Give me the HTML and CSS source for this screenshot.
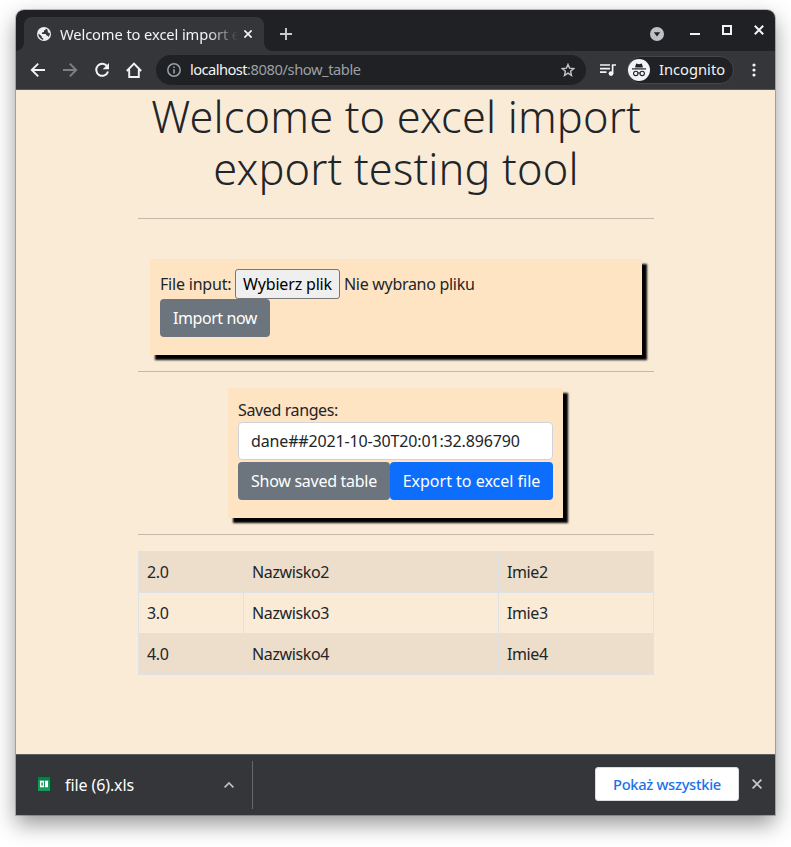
FILE: index.html
```html
<!DOCTYPE html>
<html lang="pl">
<head>
<meta charset="utf-8">
<title>Welcome to excel import export testing tool</title>
<link rel="stylesheet" href="styles.css">
</head>
<body>
<div class="window">
  <div class="tabstrip">
    <div class="tab">
      <svg class="favicon" viewBox="0 0 14 14"><circle cx="7" cy="7" r="7" fill="#eeeff0"/><path d="M1.5 6.4 4.7 9.2V10.5L6.2 11.6V13A6 6 0 0 1 1.5 6.4ZM8.7 1.5 8.6 2.8 7 3.4V5L5 5.6V7H8.8L9.6 8.8H11.3L11.5 10.4A6 6 0 0 0 12.8 6L10.9 5.4 10.5 2.5Z" fill="#35363a"/></svg>
      <span class="tab-title">Welcome to excel import e</span>
      <svg class="tab-close" viewBox="0 0 8 8"><path d="M.4.4 7.6 7.6M7.6.4.4 7.6" stroke="#f1f3f4" stroke-width="1.7"/></svg>
    </div>
    <svg class="newtab" viewBox="0 0 12 12"><path d="M6 0V12M0 6H12" stroke="#c9cbce" stroke-width="1.9"/></svg>
    <div class="controls">
      <svg width="14" height="14" class="c-search" viewBox="0 0 14 14"><circle cx="7" cy="7" r="7" fill="#bdc1c6"/><path d="M3.8 5.2H10.2L7 9.4Z" fill="#202124"/></svg>
      <svg width="10" height="10" class="c-min" viewBox="0 0 10 10"><path d="M0 9H10" stroke="#f1f3f4" stroke-width="2"/></svg>
      <svg width="10" height="10" class="c-max" viewBox="0 0 10 10"><path d="M1 1H9V9H1Z" stroke="#f1f3f4" stroke-width="2" fill="none"/></svg>
      <svg width="10" height="10" viewBox="0 0 10 10"><path d="M.8.8 9.2 9.2M9.2.8.8 9.2" stroke="#f1f3f4" stroke-width="2"/></svg>
    </div>
  </div>
  <div class="toolbar">
    <svg class="nav" viewBox="0 0 16 16"><path d="M15 8H2M8.2 1.6 1.8 8 8.2 14.4" stroke="#f1f3f4" stroke-width="1.9" fill="none"/></svg>
    <svg class="nav" viewBox="0 0 16 16"><path d="M1 8H14M7.8 1.6 14.2 8 7.8 14.4" stroke="#7f8083" stroke-width="1.9" fill="none"/></svg>
    <svg class="nav" viewBox="0 0 16 16"><path d="M13.3 4.6A6 6 0 1 0 14 9.5" stroke="#f1f3f4" stroke-width="2" fill="none"/><path d="M15 1V7.3H8.7Z" fill="#f1f3f4"/></svg>
    <svg class="nav" viewBox="0 0 16 16"><path d="M.8 9 8 1.5 15.2 9M3.2 7.5V15H12.8V7.5" stroke="#f1f3f4" stroke-width="1.9" fill="none"/></svg>
    <div class="omnibox">
      <svg width="14" height="14" viewBox="0 0 14 14"><circle cx="7" cy="7" r="6.2" stroke="#9aa0a6" stroke-width="1.5" fill="none"/><path d="M7 6.2V10.6M7 3.4V5" stroke="#9aa0a6" stroke-width="1.6"/></svg>
      <span class="url"><span class="host">localhost</span><span class="path">:8080/show_table</span></span>
      <svg width="14" height="14" viewBox="0 0 14 14"><path d="M7 1.4 8.6 5.2 12.7 5.6 9.6 8.3 10.5 12.4 7 10.2 3.5 12.4 4.4 8.3 1.3 5.6 5.4 5.2Z" stroke="#c4c6c8" stroke-width="1.4" fill="none"/></svg>
    </div>
    <svg class="queue" viewBox="0 0 16 14"><path d="M0 2H10M0 5.6H10M0 9.2H6.5" stroke="#f1f3f4" stroke-width="1.7"/><path d="M12.6 10.4V2H16" stroke="#f1f3f4" stroke-width="1.7" fill="none"/><circle cx="11" cy="10.6" r="2.4" fill="#f1f3f4"/></svg>
    <div class="incognito">
      <svg width="22" height="22" viewBox="0 0 22 22"><circle cx="11" cy="11" r="11" fill="#f1f3f4"/><path d="M4 9.9H18" stroke="#202124" stroke-width="1.2"/><path d="M7 8.6 8.2 4.4 11 5.2 13.8 4.4 15 8.6Z" fill="#202124"/><circle cx="7.8" cy="14.4" r="2.2" stroke="#202124" stroke-width="1.1" fill="none"/><circle cx="14.2" cy="14.4" r="2.2" stroke="#202124" stroke-width="1.1" fill="none"/><path d="M9.9 14H12.1" stroke="#202124"/></svg>
      <span>Incognito</span>
    </div>
    <svg class="dots" viewBox="0 0 4 14"><circle cx="2" cy="2" r="1.6" fill="#f1f3f4"/><circle cx="2" cy="7" r="1.6" fill="#f1f3f4"/><circle cx="2" cy="12" r="1.6" fill="#f1f3f4"/></svg>
  </div>

  <main class="page">
    <div class="container">
      <h1>Welcome to excel import<br>export testing tool</h1>
      <hr>
      <form class="card import">
        <div class="file-row"><span class="file-label">File input:</span><button type="button" class="choose">Wybierz plik</button><span class="no-file">Nie wybrano pliku</span></div>
        <button type="button" class="btn grey import-btn">Import now</button>
      </form>
      <hr>
      <form class="card ranges">
        <div class="ranges-label">Saved ranges:</div>
        <div class="select">dane##2021-10-30T20:01:32.896790</div>
        <div class="btn-row"><button type="button" class="btn grey show-btn">Show saved table</button><button type="button" class="btn blue">Export to excel file</button></div>
      </form>
      <hr>
      <table>
        <colgroup><col class="c1"><col class="c2"><col class="c3"></colgroup>
        <tr><td>2.0</td><td>Nazwisko2</td><td>Imie2</td></tr>
        <tr><td>3.0</td><td>Nazwisko3</td><td>Imie3</td></tr>
        <tr><td>4.0</td><td>Nazwisko4</td><td>Imie4</td></tr>
      </table>
    </div>
  </main>

  <div class="downloads">
    <div class="download">
      <svg class="file-icon" width="14" height="16" viewBox="0 0 14 16"><rect x=".5" y=".5" width="13" height="15" rx="1" fill="#189a5c" stroke="#0b4a30"/><path d="M1 1H13V4H1Z" fill="#107c48"/><path d="M3 4.8H7V11.2H3ZM8 4.8H11V11.2H8Z" fill="#fff"/><path d="M4.4 6.3H5.8V9.8H4.4Z" fill="#189a5c"/></svg>
      <span class="filename">file (6).xls</span>
      <svg class="chevron" width="10" height="6" viewBox="0 0 10 6"><path d="M.6 5.4 5 1 9.4 5.4" stroke="#bdc1c6" stroke-width="1.7" fill="none"/></svg>
    </div>
    <button type="button" class="show-all">Pokaż wszystkie</button>
    <svg class="shelf-close" width="10" height="10" viewBox="0 0 10 10"><path d="M.6.6 9.4 9.4M9.4.6.6 9.4" stroke="#c6c7c9" stroke-width="1.8"/></svg>
  </div>
</div>
</body>
</html>
```
FILE: styles.css
```css
* { box-sizing: border-box; }
body {
  margin: 0;
  height: 847px;
  padding: 10px 16px 0;
  overflow: hidden;
  background: #fff;
  font: 16px/24px "Noto Sans", "Open Sans", sans-serif;
  color: #212529;
}
svg { display: block; flex: none; }
button { font: inherit; margin: 0; cursor: pointer; }

.window {
  width: 759px;
  height: 805px;
  display: flex;
  flex-direction: column;
  border-radius: 8px 8px 0 0;
  box-shadow: 0 0 0 1px rgba(0, 0, 0, .22), 0 9px 22px rgba(0, 0, 0, .42);
}

/* Tab strip */
.tabstrip {
  height: 41px;
  padding: 7px 11px 0 8px;
  display: flex;
  align-items: flex-start;
  background: #202124;
  border-radius: 8px 8px 0 0;
}
.tab {
  position: relative;
  width: 240px;
  height: 34px;
  padding-left: 13px;
  display: flex;
  align-items: center;
  background: #35363a;
  border-radius: 8px 8px 0 0;
}
.tab::before, .tab::after {
  content: "";
  position: absolute;
  bottom: 0;
  width: 8px;
  height: 8px;
}
.tab::before { left: -8px; background: radial-gradient(circle at 0 0, transparent 7.5px, #35363a 8px); }
.tab::after { right: -8px; background: radial-gradient(circle at 100% 0, transparent 7.5px, #35363a 8px); }
.favicon { width: 14px; height: 14px; }
.tab-title {
  width: 182px;
  margin-left: 9px;
  white-space: nowrap;
  font-size: 14.7px;
  letter-spacing: -.1px;
  color: #f1f3f4;
  -webkit-mask-image: linear-gradient(90deg, #000 148px, transparent 178px);
  mask-image: linear-gradient(90deg, #000 148px, transparent 178px);
}
.tab-close { width: 8px; height: 8px; margin-left: 2px; }
.newtab { width: 12px; height: 12px; margin: 11px 0 0 16px; }
.controls { margin: 8px 0 0 auto; display: flex; }
.c-search { margin: 2px 26px 0 0; }
.c-min { margin-right: 22px; }
.c-max { margin-right: 22px; }

/* Toolbar */
.toolbar {
  height: 39px;
  padding: 0 19.5px 1px 14px;
  display: flex;
  align-items: center;
  background: #35363a;
  border-bottom: 1px solid #5a5859;
}
.nav { width: 16px; height: 16px; margin-right: 16px; }
.omnibox {
  width: 430px;
  height: 30px;
  margin-left: -2px;
  padding: 0 11px;
  display: flex;
  align-items: center;
  background: #202124;
  border-radius: 15px;
}
.url { flex: 1; margin-left: 9px; font-size: 14.7px; line-height: 20px; color: #9aa0a6; position: relative; top: -1px; }
.host { color: #f1f3f4; letter-spacing: -.55px; }
.path { letter-spacing: -.43px; }
.queue { width: 16px; height: 14px; margin-left: 14px; }
.incognito {
  width: 107px;
  height: 28px;
  margin-left: 11px;
  display: flex;
  align-items: center;
  gap: 9px;
  border: 1px solid #46474a;
  border-radius: 14px;
  background: #202124;
  font-size: 14.7px;
  line-height: 22px;
  color: #f1f3f4;
}
.incognito span { padding-bottom: 1px; }
.dots { width: 4px; height: 14px; margin-left: auto; }

/* Page */
.page { flex: 1; padding: 0 122px; background: #faebd7; }
.container { width: 516px; }
h1 {
  margin: 0;
  height: 128px;
  padding-top: 1px;
  font-size: 43.3px;
  font-weight: 330;
  line-height: 52px;
  letter-spacing: .18px;
  text-align: center;
}
hr { margin: 0; border: 0; height: 1px; background: #c4b8a9; }
.card { padding: 10px; background: #ffe4c4; box-shadow: 5px 5px 2px #000; }
.import { width: 492px; height: 96px; margin: 40px 12px 16px; }
.ranges { width: 335px; height: 130px; margin: 16px 0 16px 90px; }
.file-row { height: 30px; display: flex; align-items: center; white-space: nowrap; }
.file-label { width: 75px; letter-spacing: -.2px; }
.choose {
  width: 105px;
  height: 30px;
  padding: 0;
  border: 1px solid #767676;
  border-radius: 3px;
  background: #efefef;
  color: #000;
  letter-spacing: -.17px;
}
.no-file { margin-left: 4px; letter-spacing: -.3px; }
.btn { height: 38px; padding: 0; border: 0; border-radius: 4px; color: #fff; }
.grey { background: #6c757d; }
.blue { width: 163px; background: #0d6efd; }
.import-btn { display: block; width: 110px; letter-spacing: -.43px; }
.show-btn { width: 152px; letter-spacing: -.27px; }
.ranges-label { letter-spacing: -.38px; }
.select {
  height: 38px;
  padding: 6px 12px;
  border: 1px solid #ced4da;
  border-radius: 4px;
  background: #fff;
  letter-spacing: -.15px;
  white-space: nowrap;
}
.btn-row { margin-top: 2px; display: flex; }
table { width: 516px; margin-top: 16px; border-collapse: collapse; table-layout: fixed; }
.c1 { width: 105px; }
.c2 { width: 255px; }
td { height: 41px; padding: 8px; border: 1px solid #dee2e6; letter-spacing: -.38px; }
tr:nth-child(odd) td { background: #eddecb; }

/* Download shelf */
.downloads {
  height: 61px;
  padding-right: 13px;
  display: flex;
  align-items: center;
  background: #35363a;
  border-top: 1px solid #606063;
}
.download {
  width: 237px;
  height: 48px;
  padding: 0 18px 0 21px;
  display: flex;
  align-items: center;
  border-right: 1px solid #66676a;
}
.file-icon { margin-bottom: 2px; }
.filename { margin-left: 14px; letter-spacing: -.1px; color: #fff; }
.chevron { margin-left: auto; }
.show-all {
  width: 144px;
  height: 34px;
  margin: 0 13px 2px auto;
  padding: 0;
  border: 1px solid #dadce0;
  border-radius: 3px;
  background: #fff;
  color: #1a73e8;
  font-size: 14.7px;
  font-weight: 550;
  letter-spacing: -.3px;
}
.shelf-close { margin-bottom: 2px; }
```
